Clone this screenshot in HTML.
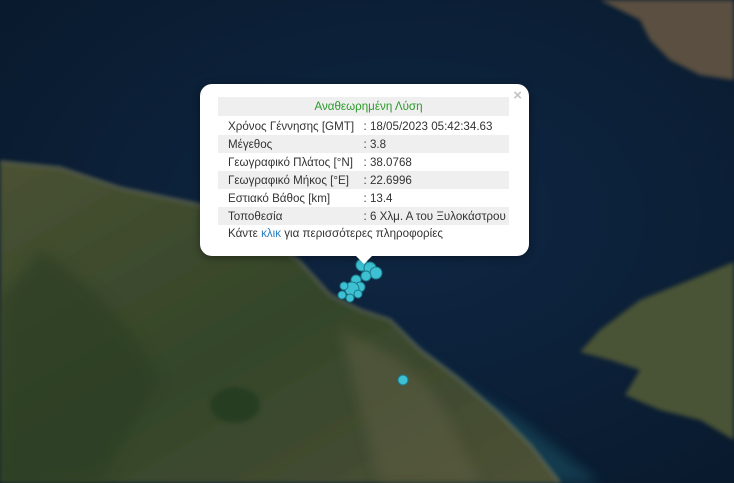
<!DOCTYPE html>
<html><head><meta charset="utf-8"><style>
body{margin:0;width:734px;height:483px;overflow:hidden;font-family:"Liberation Sans",sans-serif;position:relative;background:#0b1c30}
svg{position:absolute;left:0;top:0}
.pop{position:absolute;left:200px;top:84px;width:329px;height:172px;background:#fff;border-radius:12px;box-shadow:0 2px 8px rgba(0,0,0,.4)}
.tip{position:absolute;left:355px;top:255px;width:0;height:0;border-left:9px solid transparent;border-right:9px solid transparent;border-top:9px solid #fff}
.x{position:absolute;right:7px;top:3px;color:#c3c3c3;font-size:15px;font-weight:bold}
table{position:absolute;left:18px;top:13px;width:291px;border-collapse:collapse;font-size:11.6px;color:#333;table-layout:fixed}
td{height:18px;padding:0 0 0 10px;white-space:nowrap;overflow:hidden}
td.a{width:137px}
td+td{padding-left:0}
tr.g{background:#efefef}
.h td{color:#2a9a2a;text-align:center;height:19px}
tr.f td{padding-top:1px}
.lk{position:absolute;left:28px;top:143px;font-size:11.6px;color:#333}
.lk span{color:#2a7fc0}
</style></head><body>
<svg width="734" height="483" viewBox="0 0 734 483">
<defs>
<radialGradient id="sea" cx="0.55" cy="0.45" r="0.8"><stop offset="0" stop-color="#0f2744"/><stop offset="1" stop-color="#08182a"/></radialGradient>
<linearGradient id="land" x1="0" y1="0" x2="1" y2="1"><stop offset="0" stop-color="#4a5232"/><stop offset="0.5" stop-color="#34452a"/><stop offset="1" stop-color="#4e5236"/></linearGradient>
<filter id="b"><feGaussianBlur stdDeviation="2"/></filter>
<filter id="b6"><feGaussianBlur stdDeviation="6"/></filter>
</defs>
<rect width="734" height="483" fill="url(#sea)"/>
<path d="M380 320 Q450 380 520 420 L600 483 L470 483 Z" fill="#1b5a6a" opacity=".5" filter="url(#b6)"/>
<path d="M0 162 L60 168 L120 188 L200 205 L260 230 L300 262 L330 295 L360 310 L390 320 L420 350 L460 380 L500 415 L530 445 L560 483 L0 483 Z" fill="url(#land)" filter="url(#b)"/>
<path d="M0 162 L60 168 L120 188 L200 205 L260 230 L300 262 L330 295 L360 310 L390 320 L420 350 L460 380 L500 415 L530 445 L560 483" fill="none" stroke="#7a7a62" stroke-width="3" opacity=".6" filter="url(#b)"/>
<path d="M40 250 Q120 300 160 380 L100 483 L0 483 L0 300 Z" fill="#2c3e24" opacity=".6" filter="url(#b6)"/>
<ellipse cx="235" cy="405" rx="25" ry="18" fill="#263e22" filter="url(#b)"/>
<path d="M340 330 Q420 360 450 420 L480 483 L380 483 Z" fill="#5e5e44" opacity=".5" filter="url(#b6)"/>
<path d="M734 262 L690 280 L640 300 L600 330 L580 352 L610 360 L640 370 L625 395 L660 410 L700 420 L734 440 Z" fill="#4a5236" filter="url(#b)"/>
<path d="M600 0 L734 0 L734 80 L700 75 L670 60 L650 40 L640 20 Z" fill="#5a5040" filter="url(#b)"/>
<g fill="#3cc0d2" stroke="#1a7a8a" stroke-width="1">
<circle cx="362" cy="265" r="6"/><circle cx="370" cy="268" r="6"/><circle cx="376" cy="273" r="6"/><circle cx="366" cy="276" r="5"/>
<circle cx="356" cy="280" r="5"/><circle cx="360" cy="287" r="5"/><circle cx="352" cy="289" r="7"/><circle cx="344" cy="286" r="4"/>
<circle cx="342" cy="295" r="4"/><circle cx="350" cy="298" r="4"/><circle cx="358" cy="294" r="4"/><circle cx="403" cy="380" r="5"/>
</g>
</svg>
<div class="pop"><div class="x">×</div>
<table>
<tr class="g h"><td colspan="2">Αναθεωρημένη Λύση</td></tr>
<tr class="f"><td class="a">Χρόνος Γέννησης [GMT]</td><td>: 18/05/2023 05:42:34.63</td></tr>
<tr class="g"><td class="a">Μέγεθος</td><td>: 3.8</td></tr>
<tr><td class="a">Γεωγραφικό Πλάτος [°N]</td><td>: 38.0768</td></tr>
<tr class="g"><td class="a">Γεωγραφικό Μήκος [°E]</td><td>: 22.6996</td></tr>
<tr><td class="a">Εστιακό Βάθος [km]</td><td>: 13.4</td></tr>
<tr class="g"><td class="a">Τοποθεσία</td><td>: 6 Χλμ. Α του Ξυλοκάστρου</td></tr>
</table>
<div class="lk">Κάντε <span>κλικ</span> για περισσότερες πληροφορίες</div>
</div>
<div class="tip"></div>
</body></html>
